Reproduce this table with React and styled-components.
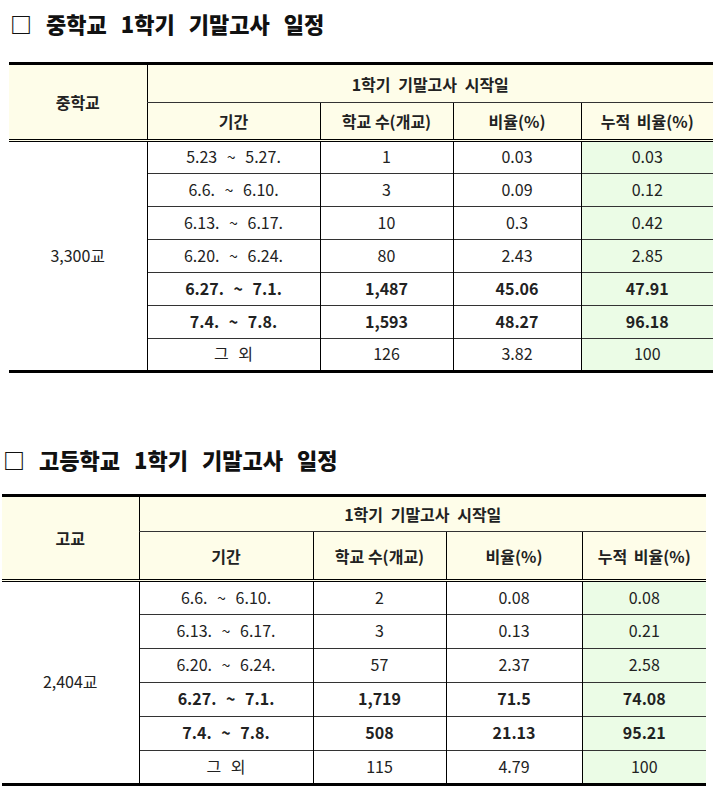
import React from 'react';
import styled, { createGlobalStyle } from 'styled-components';

const GlobalStyle = createGlobalStyle`
  body {
    margin: 0;
    background: #fff;
    font-family: "Noto Sans CJK KR", "Noto Sans", sans-serif;
    color: #222;
  }
`;

const Page = styled.div`
  width: 719px;
  padding-top: 7px;
`;

const Section = styled.section`
  margin-left: ${p => p.$left}px;
  margin-bottom: ${p => p.$gap || 0}px;
`;

const Title = styled.h2`
  margin: 0 0 ${p => p.$below}px 1px;
  font-size: 22px;
  font-weight: 800;
  line-height: 32px;
  color: #111;
  word-spacing: 9px;
`;

const Table = styled.table`
  border-collapse: collapse;
  table-layout: fixed;
  width: 704px;
  border-top: 3px solid #000;
  border-bottom: 3px solid #000;
  font-size: 16px;
`;

const Cell = styled.td`
  padding: 0 0 3px;
  text-align: center;
  vertical-align: middle;
  height: ${p => p.$h || 32}px;
  box-sizing: border-box;
  border-top: 1px solid #333;
  border-left: ${p => (p.$first ? 'none' : '1px solid #000')};
  background: ${p => (p.$green ? '#EBFCE6' : '#fff')};
  font-weight: ${p => (p.$bold ? 700 : 400)};
  color: #222;
  line-height: 1;
`;

const HeadCell = styled.th`
  padding: 0;
  text-align: center;
  vertical-align: middle;
  height: ${p => p.$h}px;
  background: #FEFDE9;
  border-left: ${p => (p.$first ? 'none' : '1px solid #000')};
  border-top: 1px solid #333;
  border-bottom: ${p => (p.$double ? '3px double #000' : '1px solid #333')};
  font-weight: 600;
  font-size: 16px;
  color: #222;
  word-spacing: ${p => p.$spread || 0}px;
`;

const Range = styled.span`
  word-spacing: 6px;
`;

const tables = [
  {
    title: '□ 중학교 1학기 기말고사 일정',
    label: '중학교',
    total: '3,300교',
    left: 9,
    cols: [138, 173, 133, 128, 132],
    rows: [
      ['5.23 ~ 5.27.', '1', '0.03', '0.03'],
      ['6.6. ~ 6.10.', '3', '0.09', '0.12'],
      ['6.13. ~ 6.17.', '10', '0.3', '0.42'],
      ['6.20. ~ 6.24.', '80', '2.43', '2.85'],
      ['6.27. ~ 7.1.', '1,487', '45.06', '47.91', true],
      ['7.4. ~ 7.8.', '1,593', '48.27', '96.18', true],
      ['그 외', '126', '3.82', '100'],
    ],
  },
  {
    title: '□ 고등학교 1학기 기말고사 일정',
    label: '고교',
    total: '2,404교',
    left: 2,
    cols: [137, 174, 133, 136, 124],
    rows: [
      ['6.6. ~ 6.10.', '2', '0.08', '0.08'],
      ['6.13. ~ 6.17.', '3', '0.13', '0.21'],
      ['6.20. ~ 6.24.', '57', '2.37', '2.58'],
      ['6.27. ~ 7.1.', '1,719', '71.5', '74.08', true],
      ['7.4. ~ 7.8.', '508', '21.13', '95.21', true],
      ['그 외', '115', '4.79', '100'],
    ],
  },
];

function Schedule({ data, gap, below, rowH, h1, h2 }) {
  return (
    <Section $left={data.left} $gap={gap}>
      <Title $below={below}>{data.title}</Title>
      <Table>
        <colgroup>
          {data.cols.map((w, i) => (
            <col key={i} style={{ width: w }} />
          ))}
        </colgroup>
        <thead>
          <tr>
            <HeadCell $first rowSpan={2} $double $h={h1}>{data.label}</HeadCell>
            <HeadCell colSpan={4} $h={h1} $spread={4}>1학기 기말고사 시작일</HeadCell>
          </tr>
          <tr>
            <HeadCell $double $h={h2}>기간</HeadCell>
            <HeadCell $double $h={h2}>학교 수(개교)</HeadCell>
            <HeadCell $double $h={h2}>비율(%)</HeadCell>
            <HeadCell $double $h={h2} $spread={3}>누적 비율(%)</HeadCell>
          </tr>
        </thead>
        <tbody>
          {data.rows.map((r, i) => (
            <tr key={i}>
              {i === 0 && (
                <Cell $first rowSpan={data.rows.length}>{data.total}</Cell>
              )}
              <Cell $bold={r[4]} $h={rowH}><Range>{r[0] === '그 외' ? '그  외' : r[0]}</Range></Cell>
              <Cell $bold={r[4]} $h={rowH}>{r[1]}</Cell>
              <Cell $bold={r[4]} $h={rowH}>{r[2]}</Cell>
              <Cell $bold={r[4]} $h={rowH} $green>{r[3]}</Cell>
            </tr>
          ))}
        </tbody>
      </Table>
    </Section>
  );
}

export default function App() {
  return (
    <>
      <GlobalStyle />
      <Page>
        <Schedule data={tables[0]} gap={70} below={23} rowH={33} h1={37} h2={36} />
        <Schedule data={tables[1]} below={19} rowH={34} h1={34} h2={47} />
      </Page>
    </>
  );
}
